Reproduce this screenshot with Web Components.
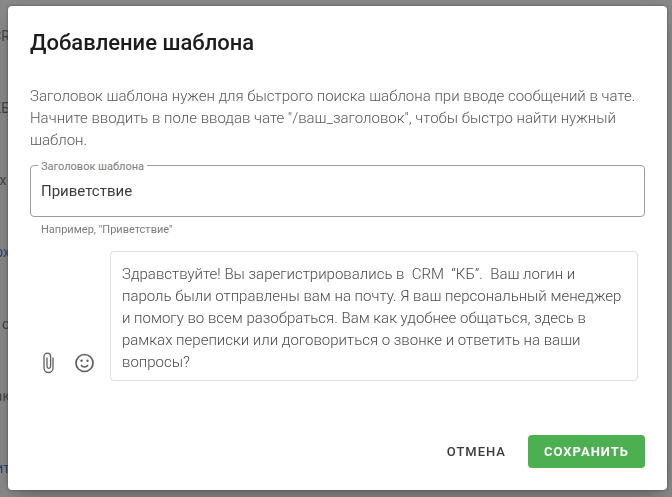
<!DOCTYPE html>
<html lang="ru">
<head>
<meta charset="UTF-8">
<meta name="viewport" content="width=device-width, initial-scale=1">
<title>Добавление шаблона</title>
<style>
    body {
        margin: 0;
        min-height: 100vh;
        background: #8c8c8c;
        font-family: Roboto, "Liberation Sans", sans-serif;
        color: #7c7c7c;
    }
</style>
</head>
<body>
<page-backdrop>
    <span>CR</span>
    <span>КБ</span>
    <span>х&nbsp;</span>
    <a href="#">рх</a>
    <span>о</span>
    <span>ак</span>
    <a href="#">ит</a>
</page-backdrop>

<modal-dialog heading="Добавление шаблона">
    <p>Заголовок шаблона нужен для быстрого поиска шаблона при вводе сообщений в чате. Начните вводить в поле вводав чате "/ваш_заголовок", чтобы быстро найти нужный шаблон.</p>
    <outlined-field label="Заголовок шаблона" value="Приветствие" hint='Например, "Приветствие"'></outlined-field>
    <message-editor>Здравствуйте! Вы зарегистрировались в  CRM  “КБ”.  Ваш логин и пароль были отправлены вам на почту. Я ваш персональный менеджер и помогу во всем разобраться. Вам как удобнее общаться, здесь в рамках переписки или договориться о звонке и ответить на ваши вопросы?</message-editor>
    <action-button slot="actions">ОТМЕНА</action-button>
    <action-button slot="actions" primary>СОХРАНИТЬ</action-button>
</modal-dialog>

<script>
class PageBackdrop extends HTMLElement {
    connectedCallback() {
        this.attachShadow({ mode: 'open' });
        this.shadowRoot.innerHTML = `
            <style>
                :host {
                    position: fixed;
                    inset: 0;
                    z-index: -1;
                    display: flex;
                    flex-direction: column;
                    width: 10px;
                    overflow: hidden;
                    font-size: 14px;
                    line-height: 72px;
                    color: #464646;
                }

                ::slotted(*) {
                    display: flex;
                    justify-content: flex-end;
                    white-space: pre;
                }

                ::slotted(a) {
                    color: #34466e;
                    text-decoration: none;
                }
            </style>
            <slot></slot>
        `;
    }
}

class ModalDialog extends HTMLElement {
    connectedCallback() {
        this.attachShadow({ mode: 'open' });
        this.shadowRoot.innerHTML = `
            <style>
                :host {
                    display: block;
                    padding: 6px 5px 6px 8px;
                }

                .dialog {
                    background: #fff;
                    border-radius: 4px;
                    padding: 21px 22px 22px;
                    box-shadow: 0 11px 15px -7px rgba(0, 0, 0, 0.2),
                        0 9px 46px 8px rgba(0, 0, 0, 0.12),
                        0 0 3px rgba(0, 0, 0, 0.4);
                }

                h2 {
                    margin: 0 0 26px;
                    font-size: 22px;
                    font-weight: 500;
                    line-height: 32px;
                    color: #1c1c1c;
                }

                .content {
                    font-size: 15px;
                    line-height: 22px;
                }

                ::slotted(p) {
                    margin: 0 0 14px;
                    font-weight: 300;
                    color: #585858;
                }

                .actions {
                    display: flex;
                    justify-content: flex-end;
                    gap: 6px;
                    margin-top: 54px;
                }
            </style>
            <section class="dialog" role="dialog" aria-labelledby="heading">
                <h2 id="heading">${this.getAttribute('heading')}</h2>
                <div class="content"><slot></slot></div>
                <div class="actions"><slot name="actions"></slot></div>
            </section>
        `;
    }
}

class OutlinedField extends HTMLElement {
    connectedCallback() {
        this.attachShadow({ mode: 'open' });
        this.shadowRoot.innerHTML = `
            <style>
                :host {
                    display: block;
                }

                .field {
                    position: relative;
                }

                label {
                    position: absolute;
                    top: -6px;
                    left: 8px;
                    padding: 0 3px;
                    background: #fff;
                    font-size: 11px;
                    line-height: 16px;
                }

                input {
                    display: block;
                    box-sizing: border-box;
                    width: 100%;
                    height: 52px;
                    padding: 0 10px;
                    border: 1px solid #9c9c9c;
                    border-radius: 4px;
                    outline: none;
                    background: none;
                    font: inherit;
                    color: #3c3c3c;
                }

                .hint {
                    padding: 5px 11px 0;
                    font-size: 11px;
                    line-height: 16px;
                }
            </style>
            <div class="field">
                <input id="title" type="text" aria-describedby="hint">
                <label for="title">${this.getAttribute('label')}</label>
            </div>
            <div class="hint" id="hint">${this.getAttribute('hint')}</div>
        `;
        this.shadowRoot.querySelector('input').value = this.getAttribute('value');
    }
}

class MessageEditor extends HTMLElement {
    connectedCallback() {
        this.attachShadow({ mode: 'open' });
        this.shadowRoot.innerHTML = `
            <style>
                :host {
                    display: flex;
                    align-items: flex-end;
                    gap: 14px;
                    margin-top: 13px;
                    padding: 0 7px 0 6px;
                }

                .tools {
                    display: flex;
                    gap: 12px;
                    padding-bottom: 6px;
                }

                button {
                    display: block;
                    width: 24px;
                    height: 24px;
                    padding: 0;
                    border: 0;
                    background: none;
                    color: #5f5f5f;
                    cursor: pointer;
                }

                svg {
                    display: block;
                    fill: currentColor;
                }

                textarea {
                    display: block;
                    box-sizing: border-box;
                    flex: 1;
                    min-width: 0;
                    height: 130px;
                    padding: 11px 10px 7px 11px;
                    border: 1px solid #e0e0e0;
                    border-radius: 4px;
                    outline: none;
                    resize: none;
                    overflow: hidden;
                    background: none;
                    font: inherit;
                    font-weight: 300;
                    color: #4c4c4c;
                }
            </style>
            <div class="tools">
                <button type="button" aria-label="Прикрепить файл">
                    <svg width="24" height="24" viewBox="0 0 24 24"><path d="M17 6.500V17a4.500 4.500 0 0 1-9 0V5.500a3.300 3.300 0 0 1 6.600 0V15.500a1.800 1.800 0 0 1-3.600 0V6.500" fill="none" stroke="currentColor" stroke-width="1.300"/></svg>
                </button>
                <button type="button" aria-label="Вставить смайл">
                    <svg width="24" height="24" viewBox="0 0 24 24"><circle cx="12.500" cy="12" r="8.500" fill="none" stroke="currentColor" stroke-width="1.700"/><circle cx="9.500" cy="9.700" r="1.200"/><circle cx="15.500" cy="9.700" r="1.200"/><path d="M9 14c1.600 2.600 5.400 2.600 7 0" fill="none" stroke="currentColor" stroke-width="1.500"/></svg>
                </button>
            </div>
            <textarea aria-label="Текст шаблона"></textarea>
        `;
        this.shadowRoot.querySelector('textarea').value = this.textContent.trim();
    }
}

class ActionButton extends HTMLElement {
    connectedCallback() {
        this.attachShadow({ mode: 'open' });
        this.shadowRoot.innerHTML = `
            <style>
                :host {
                    display: block;
                }

                button {
                    height: 33px;
                    padding: 0 16px;
                    border: 0;
                    border-radius: 4px;
                    background: none;
                    font: 500 13px/33px Roboto, sans-serif;
                    letter-spacing: 1px;
                    color: #3c3c3c;
                    cursor: pointer;
                }

                :host([primary]) button {
                    background: #4caf50;
                    font-weight: 700;
                    color: #fff;
                }
            </style>
            <button type="button"><slot></slot></button>
        `;
    }
}

customElements.define('page-backdrop', PageBackdrop);
customElements.define('modal-dialog', ModalDialog);
customElements.define('outlined-field', OutlinedField);
customElements.define('message-editor', MessageEditor);
customElements.define('action-button', ActionButton);
</script>
</body>
</html>
